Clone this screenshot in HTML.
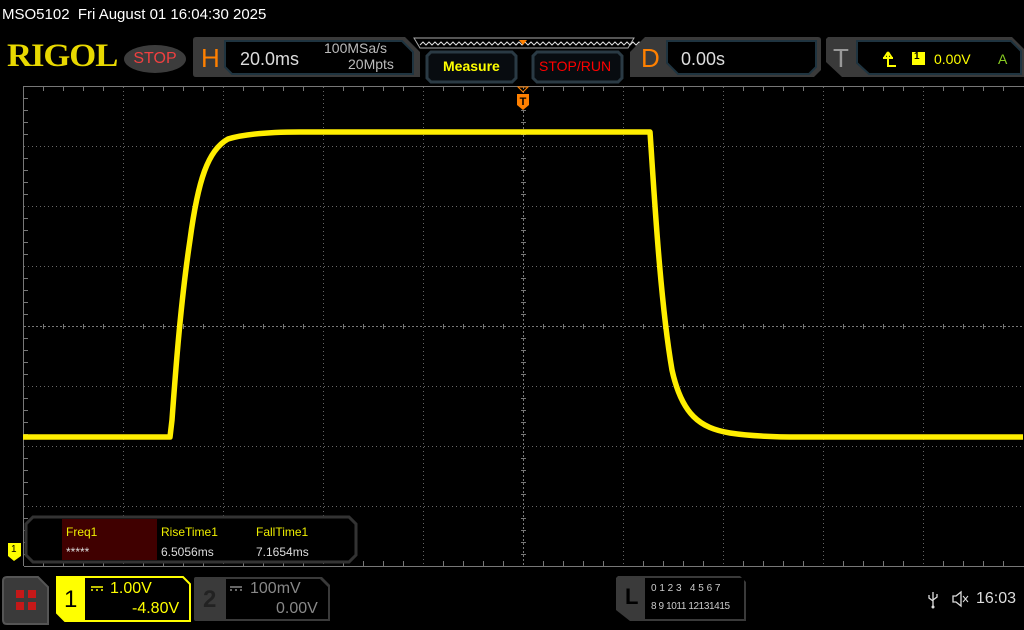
<!DOCTYPE html>
<html><head><meta charset="utf-8"><style>
body{margin:0;width:1024px;height:630px;background:#000;overflow:hidden;position:relative;font-family:"Liberation Sans",sans-serif;}
.a{position:absolute;white-space:nowrap;}
</style></head><body>
<div class="a" style="left:2px;top:6px;color:#fff;font-size:15px;">MSO5102&nbsp; Fri August 01 16:04:30 2025</div>
<div class="a" style="left:7px;top:38px;color:#e8d800;font-family:'Liberation Serif',serif;font-weight:bold;font-size:33px;letter-spacing:-1px;transform:scaleX(1.05);transform-origin:left;">RIGOL</div>
<div class="a" style="left:124px;top:45px;width:62px;height:28px;border-radius:50%;background:#3c3c3c;color:#f04040;font-size:16px;text-align:center;line-height:28px;">STOP</div>
<svg class="a" style="left:0;top:0" width="1024" height="630">
<path d="M193 40 Q193 37 196 37 L405 37 L420 52 L420 77 L196 77 Q193 77 193 74Z" fill="#3a3a3a"/>
<path d="M225 41 L402 41 L413 52 L413 74 L232 74 L225 67Z" fill="#000" stroke="#1f3440" stroke-width="2"/>
<path d="M414 38 L634 38 L628 48 L420 48Z" fill="none" stroke="#aaa" stroke-width="1"/>
<path d="M420 45 l3 -3 l3 3 l3 -3 l3 3 l3 -3 l3 3 l3 -3 l3 3 l3 -3 l3 3 l3 -3 l3 3 l3 -3 l3 3 l3 -3 l3 3 l3 -3 l3 3 l3 -3 l3 3 l3 -3 l3 3 l3 -3 l3 3 l3 -3 l3 3 l3 -3 l3 3 l3 -3 l3 3 l3 -3 l3 3 l3 -3 l3 3 l3 -3 l3 3 l3 -3 l3 3 l3 -3 l3 3 l3 -3 l3 3 l3 -3 l3 3 l3 -3 l3 3 l3 -3 l3 3 l3 -3 l3 3 l3 -3 l3 3 l3 -3 l3 3 l3 -3 l3 3 l3 -3 l3 3 l3 -3 l3 3 l3 -3 l3 3 l3 -3 l3 3 l3 -3 l3 3 l3 -3 l3 3 l3 -3 l3 3 l3 -3 l3 3 l3 -3 l3 3 l3 -3 l3 3 l3 -3 l3 3 l3 -3 l3 3 l3 -3 l3 3 l3 -3" fill="none" stroke="#ddd" stroke-width="1"/>
<path d="M519 40 L527 40 L523 45Z" fill="#ff8000"/>
<path d="M431 52 L512 52 L516 56 L516 78 L512 82 L431 82 L427 78 L427 56Z" fill="#080c10" stroke="#2a3a44" stroke-width="3"/>
<path d="M537 52 L618 52 L622 56 L622 78 L618 82 L537 82 L533 78 L533 56Z" fill="#080c10" stroke="#2a3a44" stroke-width="3"/>
<path d="M645 37 L818 37 Q821 37 821 40 L821 70 L814 77 L630 77 L630 52Z" fill="#3a3a3a"/>
<path d="M667 41 L816 41 L816 67 L809 74 L678 74 L667 63Z" fill="#000" stroke="#1f3440" stroke-width="2"/>
<path d="M828 37 L1012 37 L1024 49 L1024 77 L842 77 L826 62 L826 39Z" fill="#3a3a3a"/>
<path d="M857 41 L1011 41 L1021 51 L1021 74 L869 74 L857 63Z" fill="#000" stroke="#1f3440" stroke-width="2"/>
<path d="M883 58 L893 58 M888 52 L884 58 M888 52 L892 58 M888 52 L888 66 L896 66" stroke="#ff0" stroke-width="2" fill="none"/>
<rect x="912" y="52" width="13" height="13" fill="#ff0"/>
<g stroke="#666" stroke-width="1" stroke-dasharray="1,3" fill="none">
<path d="M123.5 87V566M223.5 87V566M323.5 87V566M423.5 87V566M623.5 87V566M723.5 87V566M823.5 87V566M923.5 87V566"/>
<path d="M24 146.5H1024M24 206.5H1024M24 266.5H1024M24 386.5H1024M24 446.5H1024M24 506.5H1024"/>
</g>
<g stroke="#777" stroke-width="1" fill="none">
<path d="M23.5 86V566M23.5 86.5H1024M24 566.5H1024"/>
</g>
<g stroke="#777" stroke-width="1" stroke-dasharray="2,2" fill="none">
<path d="M523.5 87V566M24 326.5H1024"/>
</g>
<g stroke="#777" stroke-width="1">
<path d="M43.5 86v5M63.5 86v5M83.5 86v5M103.5 86v5M143.5 86v5M163.5 86v5M183.5 86v5M203.5 86v5M243.5 86v5M263.5 86v5M283.5 86v5M303.5 86v5M343.5 86v5M363.5 86v5M383.5 86v5M403.5 86v5M443.5 86v5M463.5 86v5M483.5 86v5M503.5 86v5M543.5 86v5M563.5 86v5M583.5 86v5M603.5 86v5M643.5 86v5M663.5 86v5M683.5 86v5M703.5 86v5M743.5 86v5M763.5 86v5M783.5 86v5M803.5 86v5M843.5 86v5M863.5 86v5M883.5 86v5M903.5 86v5M943.5 86v5M963.5 86v5M983.5 86v5M1003.5 86v5"/>
<path d="M43.5 566v-5M63.5 566v-5M83.5 566v-5M103.5 566v-5M143.5 566v-5M163.5 566v-5M183.5 566v-5M203.5 566v-5M243.5 566v-5M263.5 566v-5M283.5 566v-5M303.5 566v-5M343.5 566v-5M363.5 566v-5M383.5 566v-5M403.5 566v-5M443.5 566v-5M463.5 566v-5M483.5 566v-5M503.5 566v-5M543.5 566v-5M563.5 566v-5M583.5 566v-5M603.5 566v-5M643.5 566v-5M663.5 566v-5M683.5 566v-5M703.5 566v-5M743.5 566v-5M763.5 566v-5M783.5 566v-5M803.5 566v-5M843.5 566v-5M863.5 566v-5M883.5 566v-5M903.5 566v-5M943.5 566v-5M963.5 566v-5M983.5 566v-5M1003.5 566v-5"/>
<path d="M23 98.5h5M23 110.5h5M23 122.5h5M23 134.5h5M23 158.5h5M23 170.5h5M23 182.5h5M23 194.5h5M23 218.5h5M23 230.5h5M23 242.5h5M23 254.5h5M23 278.5h5M23 290.5h5M23 302.5h5M23 314.5h5M23 338.5h5M23 350.5h5M23 362.5h5M23 374.5h5M23 398.5h5M23 410.5h5M23 422.5h5M23 434.5h5M23 458.5h5M23 470.5h5M23 482.5h5M23 494.5h5M23 518.5h5M23 530.5h5M23 542.5h5M23 554.5h5"/>
<path d="M43.5 324v5M63.5 324v5M83.5 324v5M103.5 324v5M143.5 324v5M163.5 324v5M183.5 324v5M203.5 324v5M243.5 324v5M263.5 324v5M283.5 324v5M303.5 324v5M343.5 324v5M363.5 324v5M383.5 324v5M403.5 324v5M443.5 324v5M463.5 324v5M483.5 324v5M503.5 324v5M543.5 324v5M563.5 324v5M583.5 324v5M603.5 324v5M643.5 324v5M663.5 324v5M683.5 324v5M703.5 324v5M743.5 324v5M763.5 324v5M783.5 324v5M803.5 324v5M843.5 324v5M863.5 324v5M883.5 324v5M903.5 324v5M943.5 324v5M963.5 324v5M983.5 324v5M1003.5 324v5"/>
<path d="M521 98.5h5M521 110.5h5M521 122.5h5M521 134.5h5M521 158.5h5M521 170.5h5M521 182.5h5M521 194.5h5M521 218.5h5M521 230.5h5M521 242.5h5M521 254.5h5M521 278.5h5M521 290.5h5M521 302.5h5M521 314.5h5M521 338.5h5M521 350.5h5M521 362.5h5M521 374.5h5M521 398.5h5M521 410.5h5M521 422.5h5M521 434.5h5M521 458.5h5M521 470.5h5M521 482.5h5M521 494.5h5M521 518.5h5M521 530.5h5M521 542.5h5M521 554.5h5"/>
</g>
<path d="M518 87 L528 87 L523 92Z" fill="none" stroke="#ff8000"/>
<path d="M517 94 L529 94 L529 105 L523 110 L517 105Z" fill="#ff8000"/>
<text x="523" y="105" font-size="11" font-weight="bold" text-anchor="middle" fill="#000" font-family="Liberation Sans">T</text>
<path d="M23 437 L170 437 L172 420 C176 365 181 300 190 240 C198 180 208 150 228 139 C248 133 275 132 300 132 L650 132 C654 190 660 300 672 370 C682 415 700 428 730 433 C750 436 780 437 800 437 L1023 437" fill="none" stroke="#ffee00" stroke-width="5.5" stroke-linejoin="round"/>
<path d="M33 517 L349 517 L356 524 L356 555 L349 562 L33 562 L26 555 L26 524Z" fill="#000" stroke="#333" stroke-width="3"/>
<rect x="62" y="519" width="95" height="41" fill="#400000"/>
<path d="M8 543 L21 543 L21 556 L14 561 L8 556Z" fill="#ff0"/>
<path d="M7 577 L38 577 L48 587 L48 624 L7 624 Q3 624 3 620 L3 581 Q3 577 7 577Z" fill="#3a3a3a" stroke="#555" stroke-width="2"/>
<rect x="16" y="590" width="8" height="8" fill="#c41818"/><rect x="28" y="590" width="8" height="8" fill="#c41818"/>
<rect x="16" y="602" width="8" height="8" fill="#c41818"/><rect x="28" y="602" width="8" height="8" fill="#c41818"/>
<path d="M57 577 L183 577 L190 584 L190 621 L65 621 L57 613Z" fill="#000" stroke="#ff0" stroke-width="2"/>
<path d="M57 577 L85 577 L85 621 L65 621 L57 613Z" fill="#ff0"/>
<path d="M91 587h12M91 590h2M96 590h2M101 590h2" stroke="#ff0" stroke-width="1.5"/>
<path d="M196 577 L322 577 L330 585 L330 621 L196 621Q194 621 194 619 L194 579Q194 577 196 577Z" fill="#3a3a3a"/>
<path d="M226 579 L320 579 L328 587 L328 619 L226 619Z" fill="#000"/>
<path d="M230 587h12M230 590h2M235 590h2M240 590h2" stroke="#888" stroke-width="1.5"/>
<path d="M618 576 L740 576 L746 582 L746 621 L630 621 L616 610 L616 578Z" fill="#3a3a3a"/>
<path d="M645 578 L744 578 L744 619 L645 619Z" fill="#000"/>
<path d="M933 592V606M929 595v3l4 3M937 594v3l-4 3" stroke="#ddd" stroke-width="1.3" fill="none"/>
<circle cx="933" cy="607" r="1.5" fill="#ddd"/>
<path d="M953 596h3l5-4v14l-5-4h-3Z" fill="none" stroke="#ddd" stroke-width="1.3"/>
<path d="M963 596l5 6M968 596l-5 6" stroke="#ddd" stroke-width="1"/>
</svg>
<div class="a" style="left:201px;top:43px;color:#ff8000;font-size:26px;">H</div>
<div class="a" style="left:240px;top:49px;color:#ddd;font-size:18px;">20.0ms</div>
<div class="a" style="left:324px;top:40px;color:#bbb;font-size:14px;">100MSa/s</div>
<div class="a" style="left:348px;top:56px;color:#bbb;font-size:14px;">20Mpts</div>
<div class="a" style="left:443px;top:58px;color:#ff0;font-size:14px;font-weight:bold;">Measure</div>
<div class="a" style="left:539px;top:58px;color:#f00;font-size:14px;">STOP/RUN</div>
<div class="a" style="left:641px;top:43px;color:#ff8000;font-size:26px;">D</div>
<div class="a" style="left:681px;top:49px;color:#ddd;font-size:18px;">0.00s</div>
<div class="a" style="left:833px;top:43px;color:#999;font-size:26px;">T</div>
<div class="a" style="left:914px;top:51px;color:#000;font-size:10px;font-weight:bold;">1</div>
<div class="a" style="left:934px;top:51px;color:#ff0;font-size:14px;">0.00V</div>
<div class="a" style="left:998px;top:51px;color:#8c2;font-size:14px;">A</div>
<div class="a" style="left:66px;top:525px;color:#ee0;font-size:12px;">Freq1</div>
<div class="a" style="left:66px;top:545px;color:#ddd;font-size:12px;">*****</div>
<div class="a" style="left:161px;top:525px;color:#ee0;font-size:12px;">RiseTime1</div>
<div class="a" style="left:161px;top:545px;color:#ddd;font-size:12px;">6.5056ms</div>
<div class="a" style="left:256px;top:525px;color:#ee0;font-size:12px;">FallTime1</div>
<div class="a" style="left:256px;top:545px;color:#ddd;font-size:12px;">7.1654ms</div>
<div class="a" style="left:11px;top:544px;color:#000;font-size:10px;">1</div>
<div class="a" style="left:64px;top:586px;color:#000;font-size:24px;">1</div>
<div class="a" style="left:110px;top:580px;color:#ff0;font-size:16px;">1.00V</div>
<div class="a" style="left:132px;top:600px;color:#ff0;font-size:16px;">-4.80V</div>
<div class="a" style="left:203px;top:586px;color:#222;font-size:24px;font-weight:bold;">2</div>
<div class="a" style="left:250px;top:580px;color:#888;font-size:16px;">100mV</div>
<div class="a" style="left:276px;top:600px;color:#888;font-size:16px;">0.00V</div>
<div class="a" style="left:625px;top:584px;color:#000;font-size:22px;font-weight:bold;">L</div>
<div class="a" style="left:651px;top:583px;color:#ccc;font-size:10px;">0 1 2 3&nbsp;&nbsp; 4 5 6 7</div>
<div class="a" style="left:651px;top:601px;color:#ccc;font-size:10px;letter-spacing:-0.4px;">8 9 1011 12131415</div>
<div class="a" style="left:976px;top:590px;color:#ddd;font-size:16px;">16:03</div>
</body></html>
